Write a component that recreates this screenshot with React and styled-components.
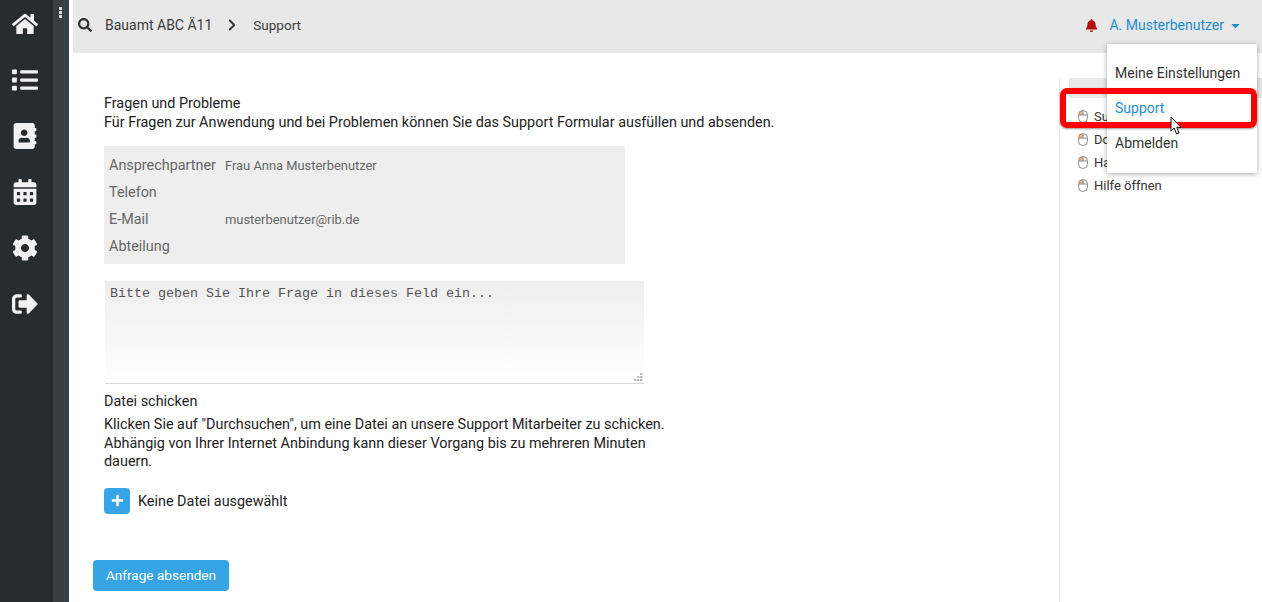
import React from "react";
import styled, { createGlobalStyle } from "styled-components";
import {
  FaHome, FaList, FaAddressBook, FaCalendarAlt, FaCog, FaSignOutAlt,
  FaSearch, FaBell, FaCaretDown, FaPlus,
} from "react-icons/fa";
import { ChevronRight } from "lucide-react";

const GlobalStyle = createGlobalStyle`
  html, body {
    margin: 0;
    height: 602px;
    overflow: hidden;
    background: #fff;
    font-family: Roboto, "Liberation Sans", sans-serif;
    font-size: 14px;
    color: #222;
  }
  * { box-sizing: border-box; }
`;

const Page = styled.div`
  position: relative;
  display: flex;
  width: 1262px;
  height: 602px;
  overflow: hidden;
`;

const Sidebar = styled.nav`
  flex: 0 0 53px;
  display: flex;
  flex-direction: column;
  align-items: center;
  gap: 28px;
  padding: 10px 3px 0 0;
  background: #272c2f;
`;

const SideIcon = styled.span`
  display: flex;
  justify-content: center;
  align-items: center;
  width: 28px;
  height: 28px;
  color: #f2f2f2;
  font-size: 26px;
`;

const Rail = styled.div`
  flex: 0 0 16px;
  display: flex;
  flex-direction: column;
  align-items: center;
  gap: 1px;
  padding: 7px 1px 0 0;
  margin-right: 4px;
  background: #373f42;
`;

const RailDot = styled.i`
  width: 3px;
  height: 3px;
  background: #dcdcdc;
`;

const Column = styled.div`
  flex: 1;
  display: flex;
  flex-direction: column;
  min-width: 0;
`;

const Header = styled.header`
  flex: 0 0 53px;
  display: flex;
  align-items: center;
  padding: 0 20px 3px 5px;
  background: #e8e8e8;
  color: #3c3c3c;
`;

const Crumb = styled.span`
  margin-left: ${(p) => p.$gap}px;
  font-size: ${(p) => p.$size || 14}px;
  line-height: 20px;
`;

const CrumbArrow = styled(ChevronRight)`
  margin-left: 11px;
  color: #333;
`;

const UserBox = styled.div`
  margin-left: auto;
  display: flex;
  align-items: center;
  color: #1f8ed0;
`;

const UserName = styled.span`
  margin: 0 5px 0 11px;
`;

const Body = styled.div`
  flex: 1;
  display: flex;
  min-height: 0;
`;

const Content = styled.main`
  flex: 0 0 986px;
  padding: 41px 0 0 31px;
`;

const Text = styled.p`
  margin: 0;
  width: ${(p) => p.$width || "auto"};
  font-size: 14.4px;
  line-height: ${(p) => p.$leading || 19}px;
  color: #222;
`;

const InfoTable = styled.dl`
  display: grid;
  grid-template-columns: 116px 1fr;
  grid-auto-rows: 27px;
  align-items: center;
  width: 521px;
  height: 118px;
  margin: 14px 0 17px;
  padding: 6px 5px 4px;
  background: #eeeeee;
`;

const InfoLabel = styled.dt`
  font-size: 14.4px;
  color: #666;
`;

const InfoValue = styled.dd`
  margin: 0;
  font-size: 12.9px;
  color: #666;
`;

const AreaWrap = styled.div`
  position: relative;
  width: 539px;
  height: 103px;
  margin: 0 0 8px 1px;
`;

const Question = styled.textarea`
  display: block;
  width: 100%;
  height: 100%;
  padding: 5px;
  border: 0;
  border-bottom: 1px solid #d8d8d8;
  outline: 0;
  resize: none;
  background: linear-gradient(#eeeeee, #ffffff);
  font-family: "Liberation Mono", monospace;
  font-size: 13.33px;
  line-height: 15px;
  color: #555;

  &::placeholder {
    color: #555;
    opacity: 1;
  }
`;

const Grip = styled.svg`
  position: absolute;
  right: 1px;
  bottom: 2px;
`;

const SectionTitle = styled(Text)`
  margin-bottom: 5px;
`;

const FileRow = styled.div`
  display: flex;
  align-items: center;
  gap: 8px;
  margin-top: 16px;
`;

const PlusButton = styled.button`
  display: flex;
  align-items: center;
  justify-content: center;
  width: 26px;
  height: 26px;
  padding: 0;
  border: 0;
  border-radius: 4px;
  background: #37a5e5;
  color: #fff;
  font-size: 13px;
`;

const FileLabel = styled.span`
  padding-top: 1px;
  font-size: 14.4px;
  color: #222;
`;

const Submit = styled.button`
  display: block;
  width: 136px;
  height: 31px;
  margin: 46px 0 0 -11px;
  padding: 0;
  border: 0;
  border-radius: 4px;
  background: #37a5e5;
  color: #fff;
  font-family: inherit;
  font-size: 13.6px;
`;

const HelpPanel = styled.aside`
  flex: 1;
  margin-top: 25px;
  padding-left: 9px;
  border-left: 1px solid #e6e6e6;
`;

const HelpHead = styled.div`
  height: 20px;
  margin-bottom: 7px;
  background: #e8e8e8;
`;

const HelpItem = styled.div`
  display: flex;
  align-items: center;
  gap: 6px;
  height: 23px;
  padding-left: 9px;
  color: #333;
  font-size: 13px;
  white-space: nowrap;
`;

const Menu = styled.ul`
  position: absolute;
  top: 44px;
  left: 1107px;
  width: 150px;
  height: 129px;
  margin: 0;
  padding: 12px 0 0;
  list-style: none;
  background: #fff;
  box-shadow: 0 1px 5px rgba(0, 0, 0, 0.35);
  z-index: 2;
`;

const MenuItem = styled.li`
  height: 35px;
  padding-left: 8px;
  line-height: 35px;
  font-size: 14px;
  white-space: nowrap;
  color: ${(p) => (p.$active ? "#1f8ed0" : "#333")};
`;

const Highlight = styled.div`
  position: absolute;
  top: 88px;
  left: 1060px;
  width: 197px;
  height: 40px;
  border: 6px solid #ff0000;
  border-radius: 7px;
  box-shadow: 0 1px 2px rgba(0, 0, 0, 0.4);
  z-index: 3;
`;

const Pointer = styled.svg`
  position: absolute;
  top: 116px;
  left: 1170px;
  z-index: 4;
`;

function MouseIcon() {
  return (
    <svg width="10" height="13" viewBox="0 0 10 13">
      <path d="M1 4.5 Q1 .6 5 .6 V5 H1Z" fill="#f3b27a" />
      <rect x=".6" y=".6" width="8.8" height="11.8" rx="4" fill="none" stroke="#8a8a8a" />
      <path d="M.8 5 H9.2 M5 .8 V5" stroke="#8a8a8a" fill="none" />
    </svg>
  );
}

const navIcons = [FaHome, FaList, FaAddressBook, FaCalendarAlt, FaCog, FaSignOutAlt];

const info = [
  ["Ansprechpartner", "Frau Anna Musterbenutzer"],
  ["Telefon", ""],
  ["E-Mail", "musterbenutzer@rib.de"],
  ["Abteilung", ""],
];

const helpItems = ["Support", "Dokumente", "Handbuch", "Hilfe öffnen"];

export default function App() {
  return (
    <Page>
      <GlobalStyle />
      <Sidebar>
        {navIcons.map((Icon, i) => (
          <SideIcon key={i}><Icon /></SideIcon>
        ))}
      </Sidebar>
      <Rail><RailDot /><RailDot /><RailDot /></Rail>
      <Column>
        <Header>
          <FaSearch size={14} color="#333" />
          <Crumb $gap={13}>Bauamt ABC Ä11</Crumb>
          <CrumbArrow size={18} strokeWidth={2.4} />
          <Crumb $gap={12} $size={13.5}>Support</Crumb>
          <UserBox>
            <FaBell size={13} color="#b30f0f" />
            <UserName>A. Musterbenutzer</UserName>
            <FaCaretDown size={13} />
          </UserBox>
        </Header>
        <Body>
          <Content>
            <Text>Fragen und Probleme</Text>
            <Text>Für Fragen zur Anwendung und bei Problemen können Sie das Support Formular ausfüllen und absenden.</Text>
            <InfoTable>
              {info.map(([label, value]) => (
                <React.Fragment key={label}>
                  <InfoLabel>{label}</InfoLabel>
                  <InfoValue>{value}</InfoValue>
                </React.Fragment>
              ))}
            </InfoTable>
            <AreaWrap>
              <Question placeholder="Bitte geben Sie Ihre Frage in dieses Feld ein..." />
              <Grip width="9" height="9" viewBox="0 0 9 9" fill="#bdbdbd">
                <rect x="6" y="0" width="2.5" height="2" />
                <rect x="3" y="3" width="2.5" height="2" />
                <rect x="6" y="3" width="2.5" height="2" />
                <rect x="0" y="6" width="2.5" height="2" />
                <rect x="3" y="6" width="2.5" height="2" />
                <rect x="6" y="6" width="2.5" height="2" />
              </Grip>
            </AreaWrap>
            <SectionTitle>Datei schicken</SectionTitle>
            <Text $width="570px" $leading={18.6}>
              Klicken Sie auf "Durchsuchen", um eine Datei an unsere Support Mitarbeiter zu schicken.
              Abhängig von Ihrer Internet Anbindung kann dieser Vorgang bis zu mehreren Minuten dauern.
            </Text>
            <FileRow>
              <PlusButton><FaPlus /></PlusButton>
              <FileLabel>Keine Datei ausgewählt</FileLabel>
            </FileRow>
            <Submit>Anfrage absenden</Submit>
          </Content>
          <HelpPanel>
            <HelpHead />
            {helpItems.map((item) => (
              <HelpItem key={item}><MouseIcon />{item}</HelpItem>
            ))}
          </HelpPanel>
        </Body>
      </Column>
      <Menu>
        <MenuItem>Meine Einstellungen</MenuItem>
        <MenuItem $active>Support</MenuItem>
        <MenuItem>Abmelden</MenuItem>
      </Menu>
      <Highlight />
      <Pointer width="13" height="20" viewBox="0 0 13 20">
        <path d="M1 1 V15 L4.2 12 L6.6 18 L9 17 L6.8 11.4 H11 Z" fill="#fff" stroke="#111" strokeWidth="1" />
      </Pointer>
    </Page>
  );
}
